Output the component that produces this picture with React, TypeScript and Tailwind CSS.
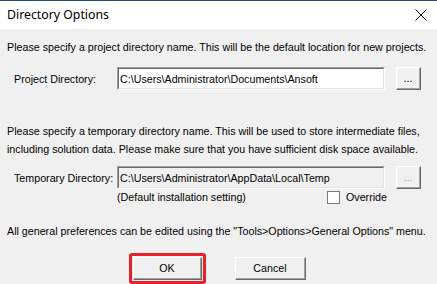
import React from "react";

const sunken =
  "border-t border-l border-[#a0a0a0] border-b border-r border-b-white border-r-white";

function Input({ value, disabled }: { value: string; disabled?: boolean }) {
  return (
    <div className={`h-[23px] w-[268px] ${sunken}`}>
      <div
        className={`h-full w-full border-t border-l border-[#696969] border-b border-r border-b-[#e3e3e3] border-r-[#e3e3e3] ${
          disabled ? "bg-[#f0f0f0]" : "bg-white"
        } flex items-center pl-[1px] text-black`}
      >
        {value}
      </div>
    </div>
  );
}

function Btn({
  children,
  w,
  h,
  disabled,
}: {
  children: React.ReactNode;
  w: string;
  h: string;
  disabled?: boolean;
}) {
  return (
    <div
      className={`${w} ${h} border-t border-l border-white border-b border-r border-b-[#696969] border-r-[#696969] bg-[#f0f0f0]`}
    >
      <div
        className={`h-full w-full border-b border-r border-b-[#a0a0a0] border-r-[#a0a0a0] flex items-center justify-center ${
          disabled ? "text-[#a0a0a0]" : "text-black"
        }`}
      >
        {children}
      </div>
    </div>
  );
}

export default function App() {
  return (
    <div
      className="w-[437px] h-[284px] overflow-hidden bg-[#f0f0f0] flex flex-col text-[10.7px] leading-[14px] text-black"
      style={{ fontFamily: '"Liberation Sans", Arial, sans-serif' }}
    >
      <div className="h-[31px] bg-white border-t border-[#1d4f7a] flex items-center justify-between pl-[7px] pr-[5px]">
        <span
          className="text-[12.3px] text-black"
          style={{ fontFamily: '"Noto Sans", sans-serif' }}
        >
          Directory Options
        </span>
        <svg width="22" height="22" viewBox="0 0 22 22">
          <path d="M5.5 5.5 L16.5 16.5 M16.5 5.5 L5.5 16.5" stroke="#000" strokeWidth="1" />
        </svg>
      </div>
      <div className="flex flex-col pl-[7px]">
        <div className="mt-[11px] whitespace-nowrap">
          Please specify a project directory name. This will be the default location for new projects.
        </div>
        <div className="mt-[13px] flex items-center">
          <div className="w-[110px] pl-[7px]">Project Directory:</div>
          <Input value="C:\Users\Administrator\Documents\Ansoft" />
          <div className="ml-[11px]">
            <Btn w="w-[25px]" h="h-[23px]">...</Btn>
          </div>
        </div>
        <div className="mt-[32px] leading-[18px] whitespace-nowrap">
          <div>
            Please specify a temporary directory name. This will be used to store intermediate files,
          </div>
          <div>
            including solution data. Please make sure that you have sufficient disk space available.
          </div>
        </div>
        <div className="mt-[8px] flex items-center">
          <div className="w-[110px] pl-[7px]">Temporary Directory:</div>
          <Input value="C:\Users\Administrator\AppData\Local\Temp" disabled />
          <div className="ml-[11px]">
            <Btn w="w-[25px]" h="h-[23px]" disabled>
              ...
            </Btn>
          </div>
        </div>
        <div className="mt-[1px] flex items-center h-[14px]">
          <div className="w-[110px]" />
          <div className="w-[210px]">(Default installation setting)</div>
          <div className="w-[13px] h-[13px] bg-white border border-[#7a7a7a] mt-[1px]" />
          <div className="ml-[6px]">Override</div>
        </div>
        <div className="mt-[20px] whitespace-nowrap">
          All general preferences can be edited using the "Tools&gt;Options&gt;General Options" menu.
        </div>
        <div className="mt-[15px] flex items-center">
          <div className="ml-[122px] w-[77px] h-[31px] border-[3px] border-[#e8202a] rounded-[3px] p-[1px]">
            <Btn w="w-full" h="h-full">OK</Btn>
          </div>
          <div className="ml-[29px]">
            <Btn w="w-[71px]" h="h-[23px]">Cancel</Btn>
          </div>
        </div>
      </div>
    </div>
  );
}
